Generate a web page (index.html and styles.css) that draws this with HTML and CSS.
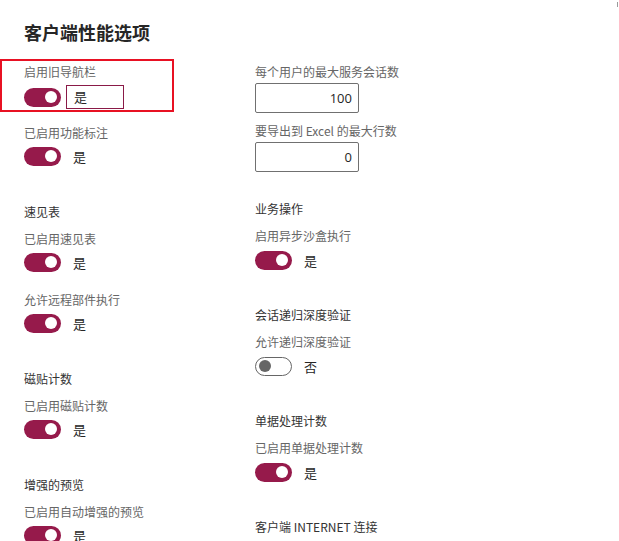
FILE: index.html
```html
<!DOCTYPE html>
<html lang="zh-CN">
<head>
<meta charset="utf-8">
<title>客户端性能选项</title>
<link rel="stylesheet" href="styles.css">
</head>
<body>
<div class="page">
  <h1 class="title">客户端性能选项</h1>
  <div class="cols">
    <div class="col col-left">
      <div class="field hl">
        <div class="label">启用旧导航栏</div>
        <div class="row">
          <span class="toggle on"><span class="knob"></span></span>
          <span class="valbox">是</span>
        </div>
      </div>
      <div class="field after-hl">
        <div class="label">已启用功能标注</div>
        <div class="row"><span class="toggle on"><span class="knob"></span></span><span class="val">是</span></div>
      </div>

      <div class="group">
        <div class="ghead">速见表</div>
        <div class="field">
          <div class="label">已启用速见表</div>
          <div class="row"><span class="toggle on"><span class="knob"></span></span><span class="val">是</span></div>
        </div>
        <div class="field">
          <div class="label">允许远程部件执行</div>
          <div class="row"><span class="toggle on"><span class="knob"></span></span><span class="val">是</span></div>
        </div>
      </div>

      <div class="group">
        <div class="ghead">磁贴计数</div>
        <div class="field">
          <div class="label">已启用磁贴计数</div>
          <div class="row"><span class="toggle on"><span class="knob"></span></span><span class="val">是</span></div>
        </div>
      </div>

      <div class="group">
        <div class="ghead">增强的预览</div>
        <div class="field">
          <div class="label">已启用自动增强的预览</div>
          <div class="row"><span class="toggle on"><span class="knob"></span></span><span class="val">是</span></div>
        </div>
      </div>
    </div>

    <div class="col col-right">
      <div class="field">
        <div class="label">每个用户的最大服务会话数</div>
        <div class="num">100</div>
      </div>
      <div class="field nf">
        <div class="label">要导出到 Excel 的最大行数</div>
        <div class="num">0</div>
      </div>

      <div class="group g-first">
        <div class="ghead">业务操作</div>
        <div class="field">
          <div class="label">启用异步沙盒执行</div>
          <div class="row"><span class="toggle on"><span class="knob"></span></span><span class="val">是</span></div>
        </div>
      </div>

      <div class="group">
        <div class="ghead">会话递归深度验证</div>
        <div class="field">
          <div class="label">允许递归深度验证</div>
          <div class="row"><span class="toggle off"><span class="knob"></span></span><span class="val">否</span></div>
        </div>
      </div>

      <div class="group">
        <div class="ghead">单据处理计数</div>
        <div class="field">
          <div class="label">已启用单据处理计数</div>
          <div class="row"><span class="toggle on"><span class="knob"></span></span><span class="val">是</span></div>
        </div>
      </div>

      <div class="group">
        <div class="ghead">客户端 INTERNET 连接</div>
      </div>
    </div>
  </div>
  <span class="scrollmark"></span>
</div>
</body>
</html>
```

FILE: styles.css
```css
html, body {
  margin: 0;
  padding: 0;
  background: #ffffff;
}
body {
  font-family: "Segoe UI", "Noto Sans", "Noto Sans CJK SC", sans-serif;
  color: #333333;
  overflow: hidden;
}
.page {
  position: relative;
  padding: 20px 0 0 24px;
  height: 541px;
  box-sizing: border-box;
}
.title {
  margin: 0 0 15px 0;
  font-size: 18px;
  line-height: 24px;
  font-weight: 600;
  color: #262626;
  font-family: "Noto Sans CJK SC", sans-serif;
}
.cols {
  display: grid;
  grid-template-columns: 231px 200px;
  align-items: start;
}
.col {
  display: flex;
  flex-direction: column;
}
.col-right {
  padding-top: 5px;
}
.label, .ghead {
  font-family: "Noto Sans CJK SC", sans-serif;
  font-size: 12px;
  line-height: 16px;
  white-space: nowrap;
}
.label {
  color: #666666;
  margin-bottom: 5px;
}
.ghead {
  color: #333333;
  margin-bottom: 11px;
}
.field + .field {
  margin-top: 20px;
}
.hl {
  margin-left: -24px;
  width: 174px;
  box-sizing: border-box;
  border: 2px solid #e81123;
  padding: 3px 0 1px 22px;
}
.field.after-hl {
  margin-top: 13px;
}
.row {
  display: flex;
  align-items: center;
  min-height: 20px;
}
.toggle {
  position: relative;
  width: 37px;
  height: 19px;
  border-radius: 10px;
  box-sizing: border-box;
  flex: none;
}
.toggle.on {
  background: #961a4b;
}
.toggle.off {
  background: #ffffff;
  border: 1px solid #666666;
}
.knob {
  position: absolute;
  top: 50%;
  width: 12px;
  height: 12px;
  margin-top: -6px;
  border-radius: 50%;
}
.toggle.on .knob {
  right: 4px;
  background: #ffffff;
}
.toggle.off .knob {
  left: 3px;
  background: #666666;
}
.val {
  margin-left: 12px;
  font-family: "Noto Sans CJK SC", sans-serif;
  font-size: 13px;
  color: #262626;
}
.valbox {
  margin-left: 5px;
  width: 58px;
  height: 24px;
  box-sizing: border-box;
  border: 1px solid #8a1a47;
  padding-left: 7px;
  font-family: "Noto Sans CJK SC", sans-serif;
  font-size: 13px;
  line-height: 22px;
  color: #262626;
}
.num {
  margin-top: -2px;
  width: 104px;
  height: 30px;
  box-sizing: border-box;
  border: 1px solid #707070;
  border-radius: 2px;
  padding-right: 6px;
  text-align: right;
  font-family: "Segoe UI", "Open Sans", "Noto Sans", sans-serif;
  font-size: 13px;
  line-height: 28px;
  color: #262626;
}
.field.nf {
  margin-top: 10px;
}
.group {
  margin-top: 38px;
  display: flex;
  flex-direction: column;
}
.group.g-first {
  margin-top: 29px;
}
.col-right .group + .group {
  margin-top: 37px;
}
.col-right .group .label {
  margin-bottom: 6px;
}
.scrollmark {
  position: absolute;
  top: 2px;
  right: 1px;
  width: 1px;
  height: 5px;
  background: #9a9a9a;
}
```
